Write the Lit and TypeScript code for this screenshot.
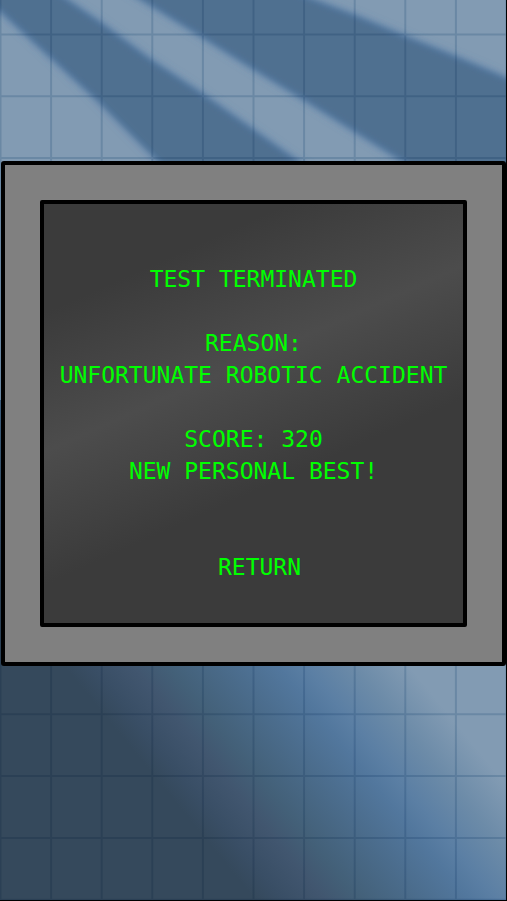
import { LitElement, html, css, svg } from "lit";
import { customElement, property } from "lit/decorators.js";

const COLUMNS = Array.from({ length: 11 }, (_, i) => 0.5 + i * 50.6);
const ROWS = Array.from({ length: 15 }, (_, i) => 34.5 + i * 61.8);

/** Tiled wall with blurred window light. */
@customElement("lab-wall")
export class LabWall extends LitElement {
  static styles = css`
    :host {
      display: block;
    }
    .wall {
      display: block;
      width: 100%;
      height: 100%;
    }
    .grid {
      stroke: #cfdfea;
      stroke-width: 2;
      mix-blend-mode: multiply;
    }
    .halo {
      fill: #4f78a6;
      stroke: #4f78a6;
      stroke-width: 3;
    }
    .shade {
      fill: #4f7090;
    }
  `;

  render() {
    const shadows = svg`
      <path d="M-40 -30 L0 9 L50 55 L98 99 L160 161 L200 200 L350 200 L295 161 L200 94 L150 61 L100 24 L65 0 L20 -30 Z" />
      <path d="M95 -30 L145 0 L200 34 L253 67 L304 98 L405 161 L465 200 L560 200 L560 101 L507 80 L455 58 L403 37 L355 17 L310 0 L240 -30 Z" />
    `;
    return html`
      <svg class="wall" viewBox="0 0 506 900" preserveAspectRatio="none" aria-hidden="true">
        <defs>
          <linearGradient id="dusk" gradientUnits="userSpaceOnUse" x1="65" y1="667" x2="272" y2="498">
            <stop offset="0" stop-color="#35495c" />
            <stop offset="0.08" stop-color="#394e65" />
            <stop offset="0.2" stop-color="#41566f" />
            <stop offset="0.3" stop-color="#436078" />
            <stop offset="0.5" stop-color="#4c6e8f" />
            <stop offset="0.62" stop-color="#52779d" />
            <stop offset="0.7" stop-color="#5b7fa4" />
            <stop offset="0.84" stop-color="#6c8ba8" />
            <stop offset="1" stop-color="#829bb3" />
          </linearGradient>
          <filter id="soft" x="-20%" y="-20%" width="140%" height="140%">
            <feGaussianBlur stdDeviation="4" />
          </filter>
          <filter id="softer" x="-20%" y="-20%" width="140%" height="140%">
            <feGaussianBlur stdDeviation="3" />
          </filter>
        </defs>
        <rect width="507" height="901" fill="#829bb3" />
        <g class="halo" filter="url(#soft)">${shadows}</g>
        <g class="shade" filter="url(#softer)">${shadows}</g>
        <rect y="400" width="507" height="501" fill="url(#dusk)" />
        <g class="grid">
          ${COLUMNS.map((x) => svg`<line x1=${x} x2=${x} y1="0" y2="901" />`)}
          ${ROWS.map((y) => svg`<line x1="0" x2="507" y1=${y} y2=${y} />`)}
        </g>
      </svg>
    `;
  }
}

@customElement("app-root")
export class AppRoot extends LitElement {
  @property() reason = "UNFORTUNATE ROBOTIC ACCIDENT";
  @property({ type: Number }) score = 320;

  static styles = css`
    :host {
      display: block;
    }
    .page {
      position: relative;
      box-sizing: border-box;
      min-height: 100vh;
      padding: 161px 0 0 1px;
      border: solid #000;
      border-width: 0 1px 1px 0;
      margin: 0;
      overflow: hidden;
    }
    .backdrop {
      position: absolute;
      inset: 0;
    }
    .monitor {
      position: relative;
      box-sizing: border-box;
      display: flex;
      aspect-ratio: 1;
      padding: 35px;
      border: 4px solid #000;
      border-radius: 3px;
      background: #808080;
    }
    .screen {
      flex: 1;
      box-sizing: border-box;
      display: flex;
      flex-direction: column;
      align-items: center;
      gap: 32px;
      padding-top: 59px;
      border: 4px solid #000;
      border-radius: 2px;
      background: linear-gradient(156deg, #3b3b3b 18%, #4c4c4c 41%, #3b3b3b 63%);
      color: #00ff00;
      font: 23px/32px "DejaVu Sans Mono", monospace;
      text-align: center;
    }
    .line {
      margin: 0;
      font: inherit;
    }
    .return {
      margin: 32px 0 0;
      padding: 0 0 0 12px;
      border: 0;
      background: none;
      color: inherit;
      font: inherit;
      cursor: pointer;
    }
  `;

  render() {
    return html`
      <main class="page">
        <lab-wall class="backdrop"></lab-wall>
        <section class="monitor">
          <div class="screen">
            <h1 class="line">TEST TERMINATED</h1>
            <p class="line">REASON:<br />${this.reason}</p>
            <p class="line">SCORE: ${this.score}<br />NEW PERSONAL BEST!</p>
            <button class="return" type="button">RETURN</button>
          </div>
        </section>
      </main>
    `;
  }
}
